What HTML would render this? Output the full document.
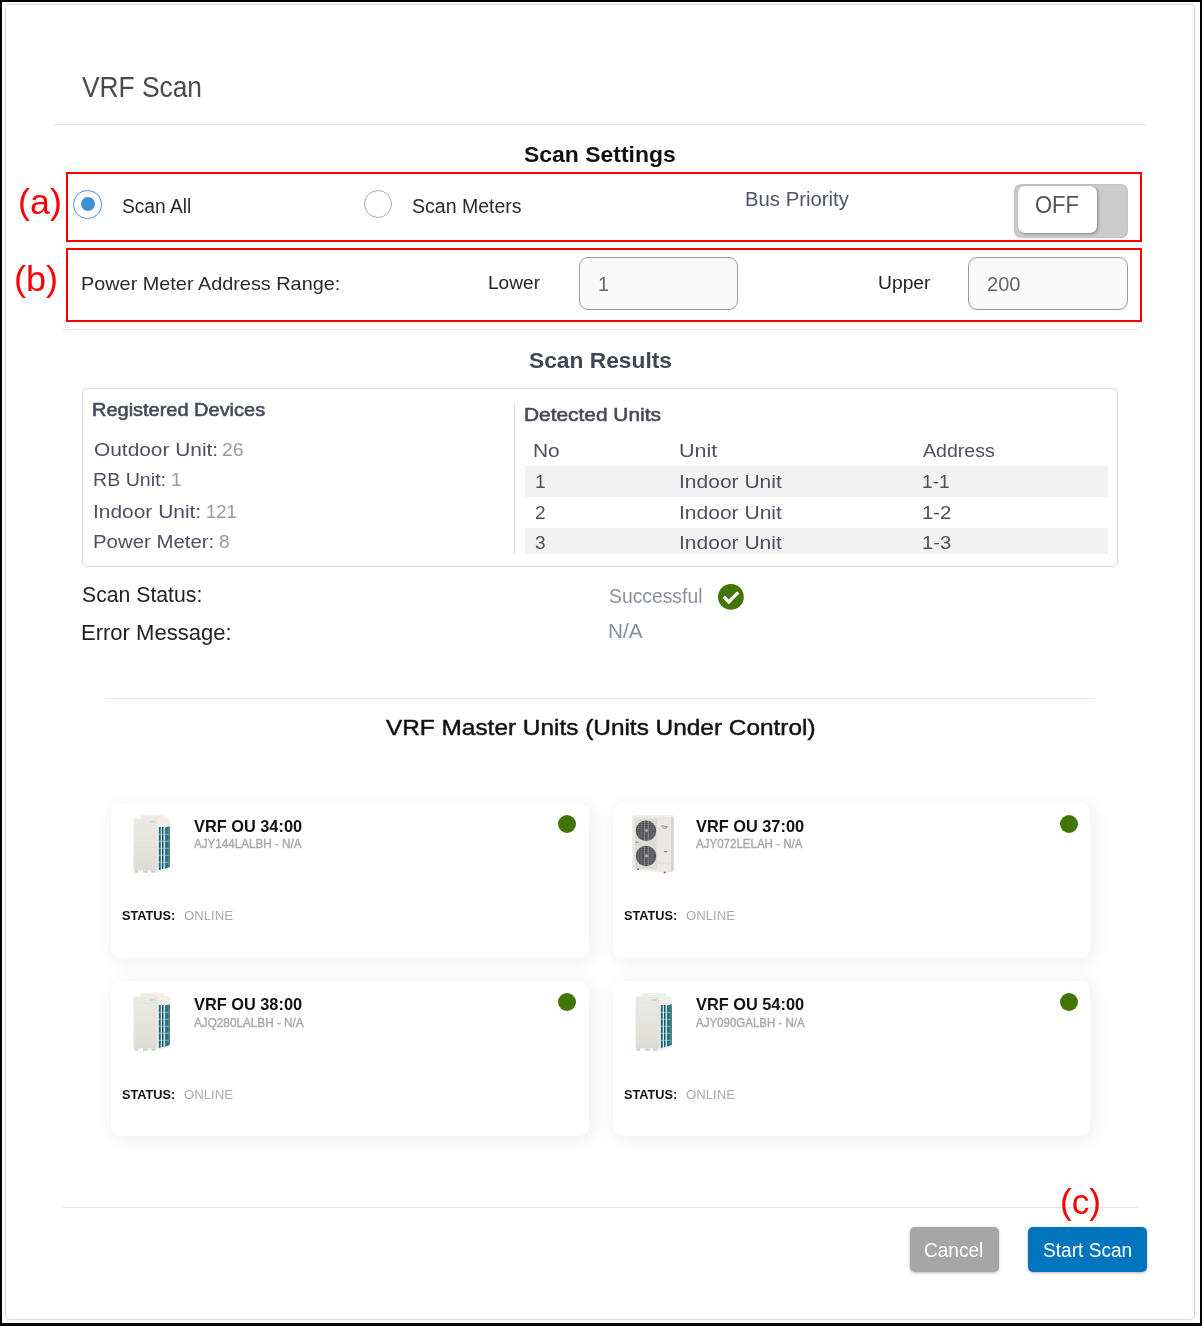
<!DOCTYPE html>
<html lang="en"><head><meta charset="utf-8"><title>VRF Scan</title>
<style>
html,body{margin:0;padding:0;background:#fff}
body{width:1202px;height:1326px;position:relative;overflow:hidden;font-family:"Liberation Sans",sans-serif}
.abs,.t,.hr,.card,.dot,.redbox,.radio,.inp,.btn,.panel,.rowbg{position:absolute;box-sizing:border-box}
.frame{position:absolute;left:0;top:0;right:0;bottom:0;box-sizing:border-box;border:solid #000;border-width:2px 2px 3px 2px}
.modal{position:absolute;box-sizing:border-box;left:5px;top:4px;width:1190px;height:1316px;border:1px solid #dcdcdc;border-radius:5px;box-shadow:0 0 3px rgba(0,0,0,.10)}
.t{white-space:pre;line-height:normal;margin:0;padding:0;font-weight:400;transform-origin:0 0}
.hr{height:1px;background:#e4e4e4}
.redbox{border:2px solid #f00}
.radio{border-radius:50%;border:1px solid #aaa;background:#fff}
.radio.on{border-color:#4a90e2}
.radio.on::after{content:"";position:absolute;left:50%;top:50%;width:14px;height:14px;margin:-7px 0 0 -7px;border-radius:50%;background:#3f91d7}
.inp{border:1px solid #9b9b9b;border-radius:9px;background:#fafafa}
.panel{border:1px solid #dfdfdf;border-radius:5px}
.rowbg{background:#f2f2f2}
.card{width:478.5px;height:155.5px;border-radius:10px;background:#fff;box-shadow:3px 3px 20px rgba(0,0,0,.075)}
.card .abs{position:absolute}
.dot{width:18.4px;height:18.4px;border-radius:50%;background:#417505}
.btn{border-radius:5px;box-shadow:0 1px 3px rgba(0,0,0,.28);border:0;padding:0;margin:0;font:inherit;text-align:left;overflow:visible}
</style></head>
<body>
<svg width="0" height="0" style="position:absolute"><defs><filter id="soft" x="-5%" y="-5%" width="110%" height="110%"><feGaussianBlur stdDeviation="0.4"/></filter><linearGradient id="gA" x1="0" y1="0" x2="0" y2="1"><stop offset="0" stop-color="#eaeae5"/><stop offset=".55" stop-color="#e5e5df"/><stop offset="1" stop-color="#dcdbd3"/></linearGradient></defs></svg>
<div class="frame"></div>
<main class="modal"></main>

<header><h1 class="t" style="left:82.00px;top:70.10px;font-size:29.87px;color:#4a4a4a;transform:scaleX(0.8820);">VRF Scan</h1></header>
<div class="hr" style="left:53px;top:124px;width:1094px"></div>

<section aria-label="Scan Settings">
<h2 class="t" style="left:524.37px;top:142.00px;font-size:22.25px;color:#111;font-weight:700;transform:scaleX(1.0315);">Scan Settings</h2>
<span class="t" style="left:18.24px;top:182.00px;font-size:35px;color:#f00;transform:scaleX(1.0246);">(a)</span>
<div class="redbox" style="left:66px;top:172px;width:1076px;height:70px"></div>
<div class="radio on" style="left:73.25px;top:190.15px;width:28.5px;height:28.5px"></div>
<label class="t" style="left:121.75px;top:195.00px;font-size:19.78px;color:#2a2a2a;transform:scaleX(0.9691);">Scan All</label>
<div class="radio" style="left:364px;top:190.25px;width:28px;height:28px"></div>
<label class="t" style="left:411.80px;top:195.00px;font-size:19.78px;color:#2a2a2a;transform:scaleX(0.9877);">Scan Meters</label>
<label class="t" style="left:745.22px;top:188.25px;font-size:19.78px;color:#4f5564;transform:scaleX(1.0273);">Bus Priority</label>
<div class="abs" style="left:1014px;top:183.5px;width:114px;height:54px;border-radius:7px;background:#cbcbcb;box-shadow:inset 0 0 2px rgba(0,0,0,.12)"></div>
<div class="abs" style="left:1017.5px;top:186px;width:79px;height:47px;border-radius:7px;background:#fff;box-shadow:1px 1px 3px rgba(0,0,0,.35)"></div>
<span class="t" style="left:1035.27px;top:191.80px;font-size:23.69px;color:#555;transform:scaleX(0.9246);">OFF</span>

<span class="t" style="left:13.95px;top:259.40px;font-size:35px;color:#f00;transform:scaleX(1.0318);">(b)</span>
<div class="redbox" style="left:66px;top:248px;width:1076px;height:74px"></div>
<label class="t" style="left:81.20px;top:272.50px;font-size:18.95px;color:#2a2a2a;transform:scaleX(1.0482);">Power Meter Address Range:</label>
<label class="t" style="left:487.93px;top:273.25px;font-size:17.82px;color:#222;transform:scaleX(1.0722);">Lower</label>
<div class="inp" style="left:578.5px;top:257px;width:159.5px;height:53px"></div>
<span class="t" style="left:597.50px;top:273.00px;font-size:19.78px;color:#666;transform:scaleX(1.0020);">1</span>
<label class="t" style="left:877.92px;top:273.25px;font-size:17.82px;color:#222;transform:scaleX(1.0823);">Upper</label>
<div class="inp" style="left:967.5px;top:257px;width:160.5px;height:53px"></div>
<span class="t" style="left:986.66px;top:273.00px;font-size:19.78px;color:#666;transform:scaleX(1.0130);">200</span>
</section>
<div class="hr" style="left:63px;top:329px;width:1075px"></div>

<section aria-label="Scan Results">
<h2 class="t" style="left:528.75px;top:348.25px;font-size:22.25px;color:#404655;font-weight:700;transform:scaleX(1.0235);">Scan Results</h2>
<div class="panel" style="left:82px;top:388px;width:1036px;height:179px"></div>
<h3 class="t" style="left:92.34px;top:399.25px;font-size:18.95px;color:#454b5a;transform:scaleX(1.0544);-webkit-text-stroke:0.6px #454b5a;">Registered Devices</h3>
<span class="t" style="left:94.00px;top:438.75px;font-size:18.95px;color:#4b5161;transform:scaleX(1.1022);">Outdoor Unit:</span><span class="t" style="left:221.88px;top:438.75px;font-size:18.95px;color:#9a9a9a;transform:scaleX(1.0228);">26</span>
<span class="t" style="left:92.96px;top:469.25px;font-size:18.95px;color:#4b5161;transform:scaleX(1.0357);">RB Unit:</span><span class="t" style="left:170.75px;top:469.25px;font-size:18.95px;color:#9a9a9a;transform:scaleX(1.0020);">1</span>
<span class="t" style="left:92.89px;top:500.50px;font-size:18.95px;color:#4b5161;transform:scaleX(1.1050);">Indoor Unit:</span><span class="t" style="left:205.98px;top:500.50px;font-size:18.95px;color:#9a9a9a;transform:scaleX(0.9698);">121</span>
<span class="t" style="left:92.92px;top:531.00px;font-size:18.95px;color:#4b5161;transform:scaleX(1.0760);">Power Meter:</span><span class="t" style="left:218.75px;top:531.00px;font-size:18.95px;color:#9a9a9a;transform:scaleX(1.0020);">8</span>
<div class="abs" style="left:514px;top:402px;width:1px;height:152px;background:#dcdcdc"></div>
<h3 class="t" style="left:523.90px;top:403.50px;font-size:18.95px;color:#454b5a;transform:scaleX(1.1020);-webkit-text-stroke:0.6px #454b5a;">Detected Units</h3>
<span class="t" style="left:533.27px;top:440.00px;font-size:18.95px;color:#4b5161;transform:scaleX(1.1040);">No</span><span class="t" style="left:678.61px;top:440.00px;font-size:18.95px;color:#4b5161;transform:scaleX(1.1372);">Unit</span><span class="t" style="left:923.25px;top:440.00px;font-size:18.95px;color:#4b5161;transform:scaleX(1.0326);">Address</span>
<div class="rowbg" style="left:525px;top:466.25px;width:583.25px;height:30.5px"></div>
<span class="t" style="left:534.50px;top:470.50px;font-size:18.95px;color:#4b5161;transform:scaleX(1.0020);">1</span><span class="t" style="left:678.64px;top:470.50px;font-size:18.95px;color:#4b5161;transform:scaleX(1.1097);">Indoor Unit</span><span class="t" style="left:922.42px;top:470.50px;font-size:18.95px;color:#4b5161;transform:scaleX(1.0092);">1-1</span>
<span class="t" style="left:535.00px;top:501.75px;font-size:18.95px;color:#4b5161;transform:scaleX(1.0020);">2</span><span class="t" style="left:678.64px;top:501.75px;font-size:18.95px;color:#4b5161;transform:scaleX(1.1104);">Indoor Unit</span><span class="t" style="left:921.93px;top:501.75px;font-size:18.95px;color:#4b5161;transform:scaleX(1.0718);">1-2</span>
<div class="rowbg" style="left:525px;top:528px;width:583.25px;height:26.25px"></div>
<span class="t" style="left:535.00px;top:532.25px;font-size:18.95px;color:#4b5161;transform:scaleX(1.0020);">3</span><span class="t" style="left:678.64px;top:532.25px;font-size:18.95px;color:#4b5161;transform:scaleX(1.1097);">Indoor Unit</span><span class="t" style="left:922.23px;top:532.25px;font-size:18.95px;color:#4b5161;transform:scaleX(1.0696);">1-3</span>
<span class="t" style="left:81.57px;top:581.40px;font-size:22.87px;color:#222;transform:scaleX(0.9280);">Scan Status:</span>
<span class="t" style="left:609.00px;top:584.50px;font-size:19.78px;color:#8b909d;transform:scaleX(0.9775);">Successful</span>
<svg class="abs" style="left:717.3px;top:582.8px;overflow:visible" width="28" height="28" viewBox="-1 -1 28 28" role="img" aria-label="success"><circle cx="12.9" cy="12.9" r="12.9" fill="#417505"/><path d="M4.5 13.7 6.8 11.5 10.8 15.5 19.1 7.3 21.45 9.5 10.8 20.3z" fill="#fff"/></svg>
<span class="t" style="left:81.09px;top:619.30px;font-size:22.87px;color:#222;transform:scaleX(0.9636);">Error Message:</span>
<span class="t" style="left:608.20px;top:620.00px;font-size:19.78px;color:#8b909d;transform:scaleX(1.0529);">N/A</span>
</section>
<div class="hr" style="left:106px;top:698px;width:988px"></div>

<section aria-label="VRF Master Units">
<h2 class="t" style="left:386.43px;top:715.00px;font-size:22.25px;color:#111;transform:scaleX(1.0959);-webkit-text-stroke:0.45px #111;">VRF Master Units (Units Under Control)</h2>
<article class="card" style="left:110.5px;top:802.5px;width:478.5px;height:155.5px"><svg class="abs" style="left:11.5px;top:5.5px" width="60" height="74" viewBox="0 0 60 74" role="img" aria-label="VRF outdoor unit">
<g filter="url(#soft)">
<path d="M18.4 10.8V7.3q0-.6.6-.6H41q.6 0 .6.6V10.8z" fill="#f1f0eb"/>
<path d="M19 9.4H41" stroke="#e2e0d8" stroke-width=".6"/>
<path d="M34.5 10.3 41.6 9.3 47.9 11.2V60.4L37.6 64.4 34.5 62.8z" fill="#f0efea"/>
<path d="M11.6 10.6H34.5V62.6H11.6z" fill="url(#gA)"/>
<path d="M34.5 10.6V62.8" stroke="#d2d0c8" stroke-width=".45"/>
<path d="M11.6 39.1H34.5" stroke="#d4d2ca" stroke-width=".5"/>
<path d="M11.6 17.2H34.5" stroke="#dddbd4" stroke-width=".4"/>
<rect x="27.6" y="13" width="5.4" height="1.8" fill="#d3d1e2"/>
<path d="M36.8 19h2V61.4l-2 .7z" fill="#1b6f86"/>
<path d="M39.95 19h1.6V60.6l-1.6.6z" fill="#0e566b"/>
<path d="M42.9 19.4 46.8 18.4V59.2l-3.9 1.5z" fill="#1c7a92"/>
<path d="M46.8 18.4 47.7 18.2V58.8l-.9.4z" fill="#3b4136"/>
<path d="M36.8 26.3h10M36.8 33.3h10M36.8 40.3h10M36.8 47.3h10M36.8 54.3h10" stroke="#cfe0e2" stroke-width=".55"/>
<path d="M12.5 62.6h3.6v2.1h-3.6zM21 62.6h5v2.1h-5zM29 62.6h4.5v2.2H29z" fill="#cfcdc4"/>
</g></svg><i class="dot" style="left:447.5px;top:12.5px"></i>
<h3 class="t" style="left:83.40px;top:13.50px;font-size:17.3px;color:#111;font-weight:700;transform:scaleX(0.9457);">VRF OU 34:00</h3>
<p class="t" style="left:83.52px;top:34.75px;font-size:12.36px;color:#a9a9a9;transform:scaleX(0.9418);-webkit-text-stroke:0.4px #a9a9a9;">AJY144LALBH - N/A</p>
<span class="t" style="left:11.38px;top:105.50px;font-size:13.6px;color:#111;font-weight:700;transform:scaleX(0.9360);">STATUS:</span>
<span class="t" style="left:73.37px;top:105.50px;font-size:13.6px;color:#aaa;transform:scaleX(0.9704);">ONLINE</span>
</article>
<article class="card" style="left:612.5px;top:802.5px;width:477px;height:155.5px"><svg class="abs" style="left:11.5px;top:5.5px" width="60" height="74" viewBox="0 0 60 74" role="img" aria-label="Outdoor unit with two fans">
<g filter="url(#soft)">
<path d="M8.3 8.7 9.6 7H48.5L49.7 9V62.4L47.2 64H35.5L8.3 61.5z" fill="#ebe8e1"/>
<path d="M8.3 8.7 9.6 7H48.5L47.2 8.9z" fill="#f0eee8"/>
<path d="M47.2 8.9 49.7 9V62.4L47.2 64z" fill="#d8d2ca"/>
<rect x="11" y="10.6" width="22.3" height="50.3" fill="#dddbd5"/>
<circle cx="22" cy="22.8" r="10.2" fill="#4b4b50"/><path d="M16.2 14.4h11.6M14.0 16.5h16.0M12.7 18.6h18.6M12.0 20.7h20.0M11.8 22.8h20.4M12.0 24.9h20.0M12.7 27.0h18.6M14.0 29.1h16.0M16.2 31.2h11.6" stroke="#828280" stroke-width=".5" fill="none"/><path d="M14.6 15.8v14.0M17.2 13.8v18.0M26.9 13.9v17.9M29.4 15.8v14.0" stroke="#85858a" stroke-width=".5" fill="none"/><path d="M20.7 12.7v20.2M24.3 12.9v19.9" stroke="#9f9f9c" stroke-width=".7" fill="none"/><circle cx="22.5" cy="22.6" r="1.7" fill="#a3a3a0"/><circle cx="22" cy="48" r="10.2" fill="#4b4b50"/><path d="M16.2 39.6h11.6M14.0 41.7h16.0M12.7 43.8h18.6M12.0 45.9h20.0M11.8 48.0h20.4M12.0 50.1h20.0M12.7 52.2h18.6M14.0 54.3h16.0M16.2 56.4h11.6" stroke="#828280" stroke-width=".5" fill="none"/><path d="M14.6 41.0v14.0M17.2 39.0v18.0M26.9 39.1v17.9M29.4 41.0v14.0" stroke="#85858a" stroke-width=".5" fill="none"/><path d="M20.7 37.9v20.2M24.3 38.1v19.9" stroke="#9f9f9c" stroke-width=".7" fill="none"/><circle cx="22.5" cy="47.8" r="1.7" fill="#a3a3a0"/>
<path d="M37 18.3q2-.9 3.4-.1t3.5.6M38.4 19.9q2 .6 4.6-.2" stroke="#6f6c66" stroke-width=".7" fill="none"/>
<rect x="40.2" y="43" width="3.1" height="1.3" fill="#8a8780"/>
<rect x="11.3" y="33.7" width="3.4" height="1.2" fill="#8f8c85"/>
<path d="M34 55H47.2" stroke="#d6d2c9" stroke-width=".5"/>
<rect x="13.2" y="60.6" width="1.8" height="1.3" fill="#55534e"/><rect x="39.6" y="63.8" width="1.9" height="1.4" fill="#55534e"/>
</g></svg><i class="dot" style="left:447.5px;top:12.5px"></i>
<h3 class="t" style="left:83.40px;top:13.50px;font-size:17.3px;color:#111;font-weight:700;transform:scaleX(0.9457);">VRF OU 37:00</h3>
<p class="t" style="left:83.47px;top:34.75px;font-size:12.36px;color:#a9a9a9;transform:scaleX(0.9330);-webkit-text-stroke:0.4px #a9a9a9;">AJY072LELAH - N/A</p>
<span class="t" style="left:11.38px;top:105.50px;font-size:13.6px;color:#111;font-weight:700;transform:scaleX(0.9360);">STATUS:</span>
<span class="t" style="left:73.37px;top:105.50px;font-size:13.6px;color:#aaa;transform:scaleX(0.9704);">ONLINE</span>
</article>
<article class="card" style="left:110.5px;top:981.25px;width:478.5px;height:154.6px"><svg class="abs" style="left:11.5px;top:4.75px" width="60" height="74" viewBox="0 0 60 74" role="img" aria-label="VRF outdoor unit">
<g filter="url(#soft)">
<path d="M18.4 10.8V7.3q0-.6.6-.6H41q.6 0 .6.6V10.8z" fill="#f1f0eb"/>
<path d="M19 9.4H41" stroke="#e2e0d8" stroke-width=".6"/>
<path d="M34.5 10.3 41.6 9.3 47.9 11.2V60.4L37.6 64.4 34.5 62.8z" fill="#f0efea"/>
<path d="M11.6 10.6H34.5V62.6H11.6z" fill="url(#gA)"/>
<path d="M34.5 10.6V62.8" stroke="#d2d0c8" stroke-width=".45"/>
<path d="M11.6 39.1H34.5" stroke="#d4d2ca" stroke-width=".5"/>
<path d="M11.6 17.2H34.5" stroke="#dddbd4" stroke-width=".4"/>
<rect x="27.6" y="13" width="5.4" height="1.8" fill="#d3d1e2"/>
<path d="M36.8 19h2V61.4l-2 .7z" fill="#1b6f86"/>
<path d="M39.95 19h1.6V60.6l-1.6.6z" fill="#0e566b"/>
<path d="M42.9 19.4 46.8 18.4V59.2l-3.9 1.5z" fill="#1c7a92"/>
<path d="M46.8 18.4 47.7 18.2V58.8l-.9.4z" fill="#3b4136"/>
<path d="M36.8 26.3h10M36.8 33.3h10M36.8 40.3h10M36.8 47.3h10M36.8 54.3h10" stroke="#cfe0e2" stroke-width=".55"/>
<path d="M12.5 62.6h3.6v2.1h-3.6zM21 62.6h5v2.1h-5zM29 62.6h4.5v2.2H29z" fill="#cfcdc4"/>
</g></svg><i class="dot" style="left:447.5px;top:11.75px"></i>
<h3 class="t" style="left:83.40px;top:12.75px;font-size:17.3px;color:#111;font-weight:700;transform:scaleX(0.9457);">VRF OU 38:00</h3>
<p class="t" style="left:83.46px;top:35.05px;font-size:12.36px;color:#a9a9a9;transform:scaleX(0.9503);-webkit-text-stroke:0.4px #a9a9a9;">AJQ280LALBH - N/A</p>
<span class="t" style="left:11.38px;top:105.50px;font-size:13.6px;color:#111;font-weight:700;transform:scaleX(0.9360);">STATUS:</span>
<span class="t" style="left:73.37px;top:105.50px;font-size:13.6px;color:#aaa;transform:scaleX(0.9704);">ONLINE</span>
</article>
<article class="card" style="left:612.5px;top:981.25px;width:477px;height:154.6px"><svg class="abs" style="left:11.5px;top:4.75px" width="60" height="74" viewBox="0 0 60 74" role="img" aria-label="VRF outdoor unit">
<g filter="url(#soft)">
<path d="M18.4 10.8V7.3q0-.6.6-.6H41q.6 0 .6.6V10.8z" fill="#f1f0eb"/>
<path d="M19 9.4H41" stroke="#e2e0d8" stroke-width=".6"/>
<path d="M34.5 10.3 41.6 9.3 47.9 11.2V60.4L37.6 64.4 34.5 62.8z" fill="#f0efea"/>
<path d="M11.6 10.6H34.5V62.6H11.6z" fill="url(#gA)"/>
<path d="M34.5 10.6V62.8" stroke="#d2d0c8" stroke-width=".45"/>
<path d="M11.6 39.1H34.5" stroke="#d4d2ca" stroke-width=".5"/>
<path d="M11.6 17.2H34.5" stroke="#dddbd4" stroke-width=".4"/>
<rect x="27.6" y="13" width="5.4" height="1.8" fill="#d3d1e2"/>
<path d="M36.8 19h2V61.4l-2 .7z" fill="#1b6f86"/>
<path d="M39.95 19h1.6V60.6l-1.6.6z" fill="#0e566b"/>
<path d="M42.9 19.4 46.8 18.4V59.2l-3.9 1.5z" fill="#1c7a92"/>
<path d="M46.8 18.4 47.7 18.2V58.8l-.9.4z" fill="#3b4136"/>
<path d="M36.8 26.3h10M36.8 33.3h10M36.8 40.3h10M36.8 47.3h10M36.8 54.3h10" stroke="#cfe0e2" stroke-width=".55"/>
<path d="M12.5 62.6h3.6v2.1h-3.6zM21 62.6h5v2.1h-5zM29 62.6h4.5v2.2H29z" fill="#cfcdc4"/>
</g></svg><i class="dot" style="left:447.5px;top:11.75px"></i>
<h3 class="t" style="left:83.40px;top:12.75px;font-size:17.3px;color:#111;font-weight:700;transform:scaleX(0.9457);">VRF OU 54:00</h3>
<p class="t" style="left:83.47px;top:35.05px;font-size:12.36px;color:#a9a9a9;transform:scaleX(0.9311);-webkit-text-stroke:0.4px #a9a9a9;">AJY090GALBH - N/A</p>
<span class="t" style="left:11.38px;top:105.50px;font-size:13.6px;color:#111;font-weight:700;transform:scaleX(0.9360);">STATUS:</span>
<span class="t" style="left:73.37px;top:105.50px;font-size:13.6px;color:#aaa;transform:scaleX(0.9704);">ONLINE</span>
</article>
</section>

<footer>
<div class="hr" style="left:63px;top:1207px;width:1075px"></div>
<span class="t" style="left:1059.65px;top:1181.90px;font-size:35px;color:#f00;transform:scaleX(1.0050);">(c)</span>
<button type="button" class="btn" style="left:909.5px;top:1227px;width:89.75px;height:44.75px;background:#a6a6a6"><span class="t" style="left:14.54px;top:11.50px;font-size:19.78px;color:#fff;transform:scaleX(0.9645);">Cancel</span></button>
<button type="button" class="btn" style="left:1028px;top:1227px;width:119px;height:44.75px;background:#0075be"><span class="t" style="left:15.00px;top:11.50px;font-size:19.78px;color:#fff;transform:scaleX(0.9667);">Start Scan</span></button>
</footer>
</body></html>
